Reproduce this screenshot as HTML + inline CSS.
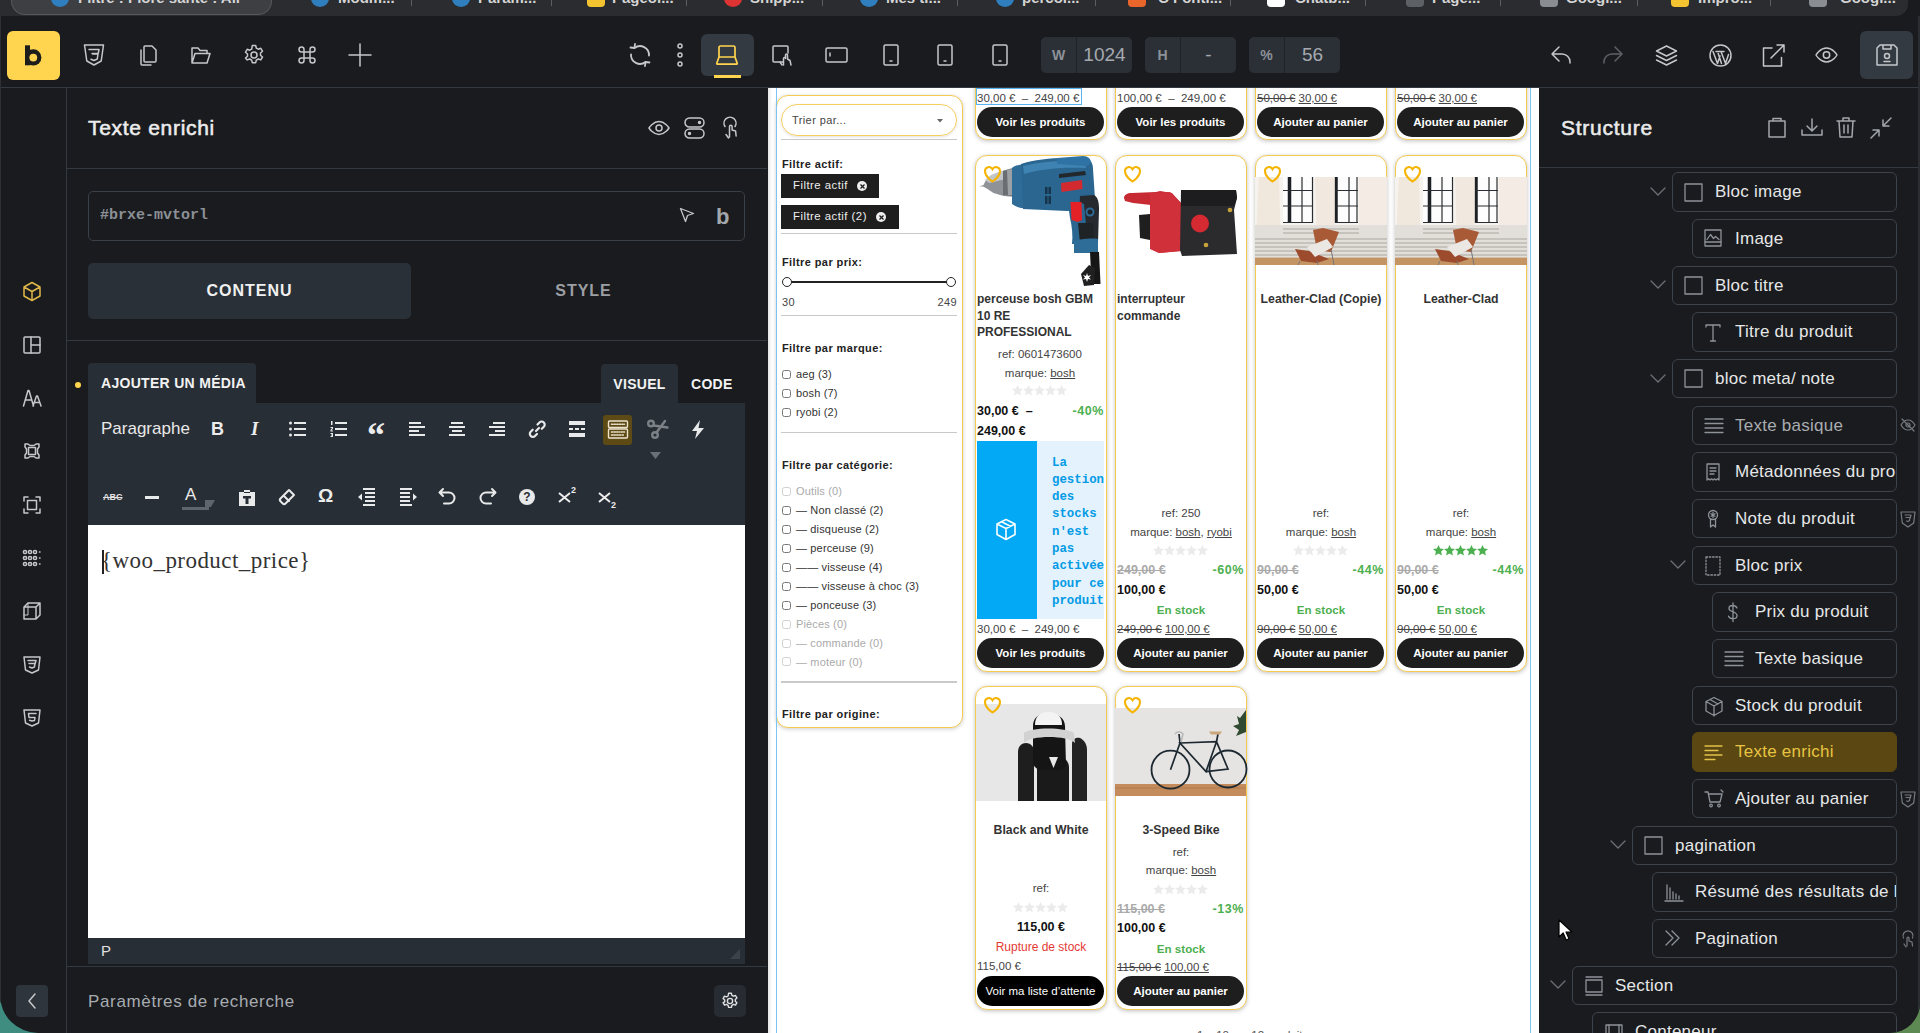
<!DOCTYPE html>
<html><head><meta charset="utf-8"><title>Bricks</title>
<style>
*{box-sizing:border-box;margin:0;padding:0}
html,body{width:1920px;height:1033px;overflow:hidden;background:#191b1e;font-family:"Liberation Sans",sans-serif}
.a{position:absolute}
svg{display:block;overflow:visible}
.t{position:absolute;white-space:nowrap}
.ic{stroke:#c5c7ca;fill:none;stroke-width:1.5;stroke-linecap:round;stroke-linejoin:round}
.line{position:absolute;background:#343a41}

body{background:linear-gradient(90deg,#3f8c80 0,#3f8c80 50%,#5d8a52 50%,#5d8a52 100%)}
#win{position:absolute;left:0;top:0;width:1920px;height:1033px;overflow:hidden;background:#191b1e;border-radius:0 0 30px 38px}
</style></head><body><div id="win">
<div class="a" style="left:0;top:0;width:1908px;height:16px;background:#2a2c2f;overflow:hidden;border-radius:0 0 12px 0">
<div class="a" style="left:12px;top:-20px;width:259px;height:34px;background:#3d3f43;border-radius:0 0 13px 13px;box-shadow:0 0 0 1px #56595d"></div>
<div class="a" style="left:51px;top:-10px;width:18px;height:17px;border-radius:50%;background:#2f7fbf"></div>
<div class="t" style="left:78px;top:-11px;font-size:15px;font-weight:bold;color:#d4d4d4;line-height:18px">Filtre : Flore santé : All</div>
<div class="a" style="left:311px;top:-10px;width:18px;height:17px;border-radius:50%;background:#2f7fbf"></div>
<div class="t" style="left:338px;top:-11px;font-size:15px;font-weight:bold;color:#d4d4d4;line-height:18px">Modifi...</div>
<div class="a" style="left:452px;top:-10px;width:18px;height:17px;border-radius:50%;background:#2f7fbf"></div>
<div class="t" style="left:478px;top:-11px;font-size:15px;font-weight:bold;color:#d4d4d4;line-height:18px">Param...</div>
<div class="a" style="left:587px;top:-10px;width:18px;height:17px;border-radius:4px;background:#f4c430"></div>
<div class="t" style="left:612px;top:-11px;font-size:15px;font-weight:bold;color:#d4d4d4;line-height:18px">Pageol...</div>
<div class="a" style="left:724px;top:-10px;width:18px;height:17px;border-radius:50%;background:#d33"></div>
<div class="t" style="left:750px;top:-11px;font-size:15px;font-weight:bold;color:#d4d4d4;line-height:18px">Snipp...</div>
<div class="a" style="left:860px;top:-10px;width:18px;height:17px;border-radius:50%;background:#2f7fbf"></div>
<div class="t" style="left:886px;top:-11px;font-size:15px;font-weight:bold;color:#d4d4d4;line-height:18px">Mes ti...</div>
<div class="a" style="left:996px;top:-10px;width:18px;height:17px;border-radius:50%;background:#2f7fbf"></div>
<div class="t" style="left:1022px;top:-11px;font-size:15px;font-weight:bold;color:#d4d4d4;line-height:18px">percol...</div>
<div class="a" style="left:1128px;top:-10px;width:18px;height:17px;border-radius:4px;background:#e8652b"></div>
<div class="t" style="left:1158px;top:-11px;font-size:15px;font-weight:bold;color:#d4d4d4;line-height:18px">C Fonti...</div>
<div class="a" style="left:1267px;top:-10px;width:18px;height:17px;border-radius:4px;background:#fff"></div>
<div class="t" style="left:1295px;top:-11px;font-size:15px;font-weight:bold;color:#d4d4d4;line-height:18px">Chatb...</div>
<div class="a" style="left:1406px;top:-10px;width:18px;height:17px;border-radius:4px;background:#5d6064"></div>
<div class="t" style="left:1432px;top:-11px;font-size:15px;font-weight:bold;color:#d4d4d4;line-height:18px">Page...</div>
<div class="a" style="left:1540px;top:-10px;width:18px;height:17px;border-radius:4px;background:#8a8d91"></div>
<div class="t" style="left:1566px;top:-11px;font-size:15px;font-weight:bold;color:#d4d4d4;line-height:18px">Googl...</div>
<div class="a" style="left:1671px;top:-10px;width:18px;height:17px;border-radius:4px;background:#f4c430"></div>
<div class="t" style="left:1698px;top:-11px;font-size:15px;font-weight:bold;color:#d4d4d4;line-height:18px">Impro...</div>
<div class="a" style="left:1809px;top:-10px;width:18px;height:17px;border-radius:4px;background:#8a8d91"></div>
<div class="t" style="left:1840px;top:-11px;font-size:15px;font-weight:bold;color:#d4d4d4;line-height:18px">Googl...</div>
<div class="a" style="left:411px;top:0;width:1px;height:6px;background:#5a5d61"></div>
<div class="a" style="left:551px;top:0;width:1px;height:6px;background:#5a5d61"></div>
<div class="a" style="left:686px;top:0;width:1px;height:6px;background:#5a5d61"></div>
<div class="a" style="left:822px;top:0;width:1px;height:6px;background:#5a5d61"></div>
<div class="a" style="left:957px;top:0;width:1px;height:6px;background:#5a5d61"></div>
<div class="a" style="left:1095px;top:0;width:1px;height:6px;background:#5a5d61"></div>
<div class="a" style="left:1230px;top:0;width:1px;height:6px;background:#5a5d61"></div>
<div class="a" style="left:1365px;top:0;width:1px;height:6px;background:#5a5d61"></div>
<div class="a" style="left:1500px;top:0;width:1px;height:6px;background:#5a5d61"></div>
<div class="a" style="left:1637px;top:0;width:1px;height:6px;background:#5a5d61"></div>
<div class="a" style="left:1770px;top:0;width:1px;height:6px;background:#5a5d61"></div>
</div>
<div class="a" style="left:0;top:16px;width:1920px;height:71px;background:#191b1e"></div>
<div class="line" style="left:0;top:87px;width:1920px;height:1px"></div>
<div class="a" style="left:7px;top:31px;width:53px;height:49px;background:#ffd54f;border-radius:6px"></div>
<svg class="a " style="left:24px;top:45px;width:19px;height:22px;" viewBox="0 0 19 22"><rect x="1" y="0.3" width="5" height="20" fill="#1d1d1b"/><circle cx="9.3" cy="12.4" r="8.1" fill="#1d1d1b"/><circle cx="9.3" cy="12.6" r="3.9" fill="#ffd54f"/></svg>
<svg class="a ic" style="left:83px;top:44px;width:22px;height:22px;" viewBox="0 0 22 22"><path d="M1.5 1h19l-2.3 16L11 21l-7.2-4z"/><path d="M6 5.5h10l-.8 4H9 M9.5 10h5.5l-.7 5L11 16.5l-3-1.2"/></svg>
<svg class="a ic" style="left:136px;top:44px;width:22px;height:22px;" viewBox="0 0 22 22"><path d="M9 2h7l4 4v11a1 1 0 0 1-1 1H9a1 1 0 0 1-1-1V3a1 1 0 0 1 1-1z"/><path d="M5 6v14a1 1 0 0 0 1 1h9"/></svg>
<svg class="a ic" style="left:189px;top:44px;width:22px;height:22px;" viewBox="0 0 22 22"><path d="M3 19V4h6l2 2.5h7v3 M3 19l3-9.5h15L18 19z"/></svg>
<svg class="a ic" style="left:243px;top:44px;width:22px;height:22px;" viewBox="0 0 22 22"><circle cx="11" cy="11" r="3"/><path d="M9.3 1.5h3.4l.6 2.6 2 1.1 2.5-.9 1.7 2.9-2 1.8v2.2l2 1.8-1.7 2.9-2.5-.9-2 1.1-.6 2.6H9.3l-.6-2.6-2-1.1-2.5.9L2.5 14l2-1.8V10l-2-1.8 1.7-2.9 2.5.9 2-1.1z"/></svg>
<svg class="a ic" style="left:296px;top:44px;width:22px;height:22px;" viewBox="0 0 22 22"><path d="M8 8h6v6H8z M8 8V5.5A2.5 2.5 0 1 0 5.5 8H8 M14 8V5.5A2.5 2.5 0 1 1 16.5 8H14 M8 14v2.5A2.5 2.5 0 1 1 5.5 14H8 M14 14v2.5a2.5 2.5 0 1 0 2.5-2.5H14"/></svg>
<svg class="a ic" style="left:349px;top:44px;width:22px;height:22px;" viewBox="0 0 22 22"><path d="M11 0v22 M0 11h22"/></svg>
<div class="a" style="left:701px;top:34px;width:53px;height:42px;background:#343a42;border-radius:6px"></div>
<div class="a" style="left:714px;top:75px;width:27px;height:2.5px;background:#ffd54f"></div>
<svg class="a ic" style="left:629px;top:44px;width:22px;height:22px;stroke-width:1.8" viewBox="0 0 22 22"><path d="M5.5 4A9 9 0 0 1 20 11.5 M16.5 18A9 9 0 0 1 2 10.5"/><path d="M1.5 3.5l4 .5.5-4 M20.5 18.5l-4-.5-.5 4"/></svg>
<svg class="a ic" style="left:674px;top:43px;width:12px;height:24px;" viewBox="0 0 12 24"><circle cx="6" cy="3" r="2"/><circle cx="6" cy="12" r="2"/><circle cx="6" cy="21" r="2"/></svg>
<svg class="a ic" style="left:716px;top:45px;width:22px;height:20px;stroke:#ffd54f;stroke-width:1.7" viewBox="0 0 22 20"><path d="M4.5 1h13a1.5 1.5 0 0 1 1.5 1.5V12H3V2.5A1.5 1.5 0 0 1 4.5 1z M3 12L.8 18.2a.8.8 0 0 0 .8 1h18.8a.8.8 0 0 0 .8-1L19 12"/></svg>
<svg class="a ic" style="left:771px;top:44px;width:22px;height:22px;" viewBox="0 0 22 22"><path d="M12 18H3a1 1 0 0 1-1-1V3a1 1 0 0 1 1-1h13a1 1 0 0 1 1 1v6"/><path d="M11 21l-2-3 M12.5 21v-6.5a1 1 0 0 1 2 0V11a1 1 0 0 1 2 0v4l2.5 1.5 1 4.5"/></svg>
<svg class="a ic" style="left:825px;top:47px;width:23px;height:16px;" viewBox="0 0 23 16"><rect x="1" y="1" width="21" height="14" rx="1.5"/><path d="M5 6v3"/></svg>
<svg class="a ic" style="left:883px;top:44px;width:16px;height:22px;" viewBox="0 0 16 22"><rect x="1" y="1" width="14" height="20" rx="1.5"/><path d="M7 17h2"/></svg>
<svg class="a ic" style="left:937px;top:44px;width:16px;height:22px;" viewBox="0 0 16 22"><rect x="1" y="1" width="14" height="20" rx="1.5"/><path d="M7 17h2"/></svg>
<svg class="a ic" style="left:992px;top:44px;width:16px;height:22px;" viewBox="0 0 16 22"><rect x="1" y="1" width="14" height="20" rx="1.5"/><path d="M7 17h2"/></svg>
<div class="a" style="left:1041px;top:37px;width:91px;height:36px;background:#2b3037;border-radius:5px"></div>
<div class="a" style="left:1076px;top:37px;width:1px;height:36px;background:#1e2126"></div>
<div class="t" style="left:1041px;top:37px;width:35px;text-align:center;line-height:36px;font-size:14px;font-weight:bold;color:#8d9298">W</div>
<div class="t" style="left:1077px;top:37px;width:55px;text-align:center;line-height:36px;font-size:19px;color:#a6aab0">1024</div>
<div class="a" style="left:1145px;top:37px;width:91px;height:36px;background:#2b3037;border-radius:5px"></div>
<div class="a" style="left:1180px;top:37px;width:1px;height:36px;background:#1e2126"></div>
<div class="t" style="left:1145px;top:37px;width:35px;text-align:center;line-height:36px;font-size:14px;font-weight:bold;color:#8d9298">H</div>
<div class="t" style="left:1181px;top:37px;width:55px;text-align:center;line-height:36px;font-size:19px;color:#a6aab0">-</div>
<div class="a" style="left:1249px;top:37px;width:91px;height:36px;background:#2b3037;border-radius:5px"></div>
<div class="a" style="left:1284px;top:37px;width:1px;height:36px;background:#1e2126"></div>
<div class="t" style="left:1249px;top:37px;width:35px;text-align:center;line-height:36px;font-size:14px;font-weight:bold;color:#8d9298">%</div>
<div class="t" style="left:1285px;top:37px;width:55px;text-align:center;line-height:36px;font-size:19px;color:#a6aab0">56</div>
<svg class="a ic" style="left:1550px;top:45px;width:22px;height:20px;" viewBox="0 0 22 20"><path d="M9 2L2 9l7 7 M2 9h10a8 8 0 0 1 8 8v1"/></svg>
<svg class="a ic" style="left:1602px;top:45px;width:22px;height:20px;stroke:#5d6166" viewBox="0 0 22 20"><path d="M13 2l7 7-7 7 M20 9H10a8 8 0 0 0-8 8v1"/></svg>
<svg class="a ic" style="left:1655px;top:44px;width:23px;height:22px;" viewBox="0 0 23 22"><path d="M11.5 2l10 5-10 5-10-5z M1.5 11.5l10 5 10-5 M1.5 16l10 5 10-5"/></svg>
<svg class="a ic" style="left:1709px;top:44px;width:23px;height:23px;" viewBox="0 0 23 23"><circle cx="11.5" cy="11.5" r="10.5"/><path d="M4 7.5l4.5 12 2.5-7.5 M7 7.5h3.5 M12 7.5l4.5 12 3-9 M11 7.5h4 M9.2 9.5l3.3 10"/></svg>
<svg class="a ic" style="left:1762px;top:44px;width:23px;height:23px;" viewBox="0 0 23 23"><path d="M10 4H1.5v18h18v-8.5 M9 14L22 1 M15 1h7v7"/></svg>
<svg class="a ic" style="left:1815px;top:47px;width:23px;height:16px;" viewBox="0 0 23 16"><path d="M1 8s4-7 10.5-7S22 8 22 8s-4 7-10.5 7S1 8 1 8z"/><circle cx="11.5" cy="8" r="3.2"/></svg>
<div class="a" style="left:1860px;top:31px;width:53px;height:48px;background:#343a42;border-radius:6px"></div>
<svg class="a ic" style="left:1876px;top:44px;width:22px;height:22px;" viewBox="0 0 22 22"><path d="M4 1h14l3 3v17H1V4z M7 1v4h8V1"/><circle cx="11" cy="12" r="2.5"/><path d="M8 17.5h6"/></svg>
<div class="line" style="left:66px;top:88px;width:1px;height:945px"></div>
<div class="a" style="left:0;top:88px;width:1px;height:945px;background:#2a2d31"></div>
<svg class="a ic" style="left:22px;top:281px;width:20px;height:20px;stroke:#e0b84a" viewBox="0 0 20 20"><path d="M10 1.5l8 4.5v9l-8 4.5-8-4.5V6z M2 6l8 4.5 8-4.5 M10 10.5v9"/></svg>
<svg class="a ic" style="left:22px;top:335px;width:20px;height:20px;" viewBox="0 0 20 20"><rect x="2" y="2" width="16" height="16" rx="1"/><path d="M9 2v16 M9 10h9"/></svg>
<svg class="a ic" style="left:22px;top:388px;width:20px;height:20px;" viewBox="0 0 20 20"><path d="M1.5 18L6 2.5h1L11.5 18 M3.2 12h6.6 M11 18l3.5-10h1L19 18 M12.3 14.5h5.5"/></svg>
<svg class="a ic" style="left:22px;top:441px;width:20px;height:20px;" viewBox="0 0 20 20"><path d="M3 3h3l2 1.5h4L14 3h3v3l-1.5 2v4L17 14v3h-3l-2-1.5H8L6 17H3v-3l1.5-2V8L3 6z"/><rect x="6.5" y="6.5" width="7" height="7"/></svg>
<svg class="a ic" style="left:22px;top:495px;width:20px;height:20px;" viewBox="0 0 20 20"><path d="M2 6V2h4 M14 2h4v4 M18 14v4h-4 M6 18H2v-4"/><rect x="5.5" y="5.5" width="9" height="9"/></svg>
<svg class="a ic" style="left:22px;top:548px;width:20px;height:20px;" viewBox="0 0 20 20"><circle cx="3" cy="4" r="1.6"/><circle cx="8" cy="4" r="1.6"/><circle cx="13" cy="4" r="1.6"/><circle cx="3" cy="10" r="1.6"/><circle cx="8" cy="10" r="1.6"/><circle cx="13" cy="10" r="1.6"/><circle cx="3" cy="16" r="1.6"/><circle cx="8" cy="16" r="1.6"/><circle cx="13" cy="16" r="1.6"/><path d="M17.5 4h.5 M17.5 10h.5 M17.5 16h.5"/></svg>
<svg class="a ic" style="left:22px;top:601px;width:20px;height:20px;" viewBox="0 0 20 20"><path d="M6 2h12v12l-4 4H2V6z M2 6h12v12 M14 6l4-4 M2 6l4-4"/><path d="M6 2v12H2" stroke-width="1"/></svg>
<svg class="a ic" style="left:22px;top:655px;width:20px;height:20px;" viewBox="0 0 20 20"><path d="M2 2h16l-1.5 13L10 18l-6.5-3z M6 5.5h8l-.8 3H8 M7 8.5h6l-.6 3.5L10 13l-2.5-1"/></svg>
<svg class="a ic" style="left:22px;top:708px;width:20px;height:20px;" viewBox="0 0 20 20"><path d="M2 2h16l-1.5 13L10 18l-6.5-3z M14 5.5H6.5l.5 4h6l-.5 3L10 13l-2.5-.8"/></svg>
<div class="a" style="left:16px;top:985px;width:32px;height:32px;background:#2f353c;border-radius:4px"></div>
<svg class="a ic" style="left:27px;top:993px;width:10px;height:16px;" viewBox="0 0 10 16"><path d="M8 1L2 8l6 7"/></svg>
<div class="t" style="left:88px;top:115.5px;font-size:21px;line-height:24px;color:#ececec;letter-spacing:0.7px;-webkit-text-stroke:0.55px #ececec">Texte enrichi</div>
<svg class="a ic" style="left:648px;top:120px;width:22px;height:16px;" viewBox="0 0 22 16"><path d="M1 8s4-6.5 10-6.5S21 8 21 8s-4 6.5-10 6.5S1 8 1 8z"/><circle cx="11" cy="8" r="3"/></svg>
<svg class="a ic" style="left:684px;top:117px;width:21px;height:22px;" viewBox="0 0 21 22"><rect x="1" y="1" width="19" height="9" rx="4.5"/><rect x="1" y="12" width="19" height="9" rx="4.5"/><circle cx="15.5" cy="5.5" r="1" fill="#c5c7ca"/><circle cx="5.5" cy="16.5" r="1" fill="#c5c7ca"/></svg>
<svg class="a ic" style="left:720px;top:117px;width:20px;height:22px;" viewBox="0 0 20 22"><path d="M5 9.5a6 6 0 1 1 10 0"/><path d="M8.5 21l-2.5-3.5 M9.5 20V9.5a1.3 1.3 0 0 1 2.6 0V13l3.5 1 .5 5"/></svg>
<div class="line" style="left:67px;top:168px;width:700px;height:1px"></div>
<div class="a" style="left:88px;top:191px;width:657px;height:50px;border:1px solid #3a4047;border-radius:5px"></div>
<div class="t" style="left:100px;top:207px;font-family:'Liberation Mono',monospace;font-size:15px;font-weight:bold;line-height:18px;color:#8b9096">#brxe-mvtorl</div>
<svg class="a ic" style="left:679px;top:207px;width:16px;height:16px;stroke-width:1.3" viewBox="0 0 16 16"><path d="M1.5 1.5l13 5-6 2-2 6z"/></svg>
<div class="t" style="left:716px;top:205px;font-size:22px;font-weight:bold;line-height:24px;color:#a3a7ab">b</div>
<div class="a" style="left:88px;top:263px;width:323px;height:56px;background:#293038;border-radius:5px"></div>
<div class="t" style="left:88px;top:263px;width:323px;line-height:56px;text-align:center;font-size:16px;font-weight:bold;color:#f0f0f0;letter-spacing:1px">CONTENU</div>
<div class="t" style="left:422px;top:263px;width:323px;line-height:56px;text-align:center;font-size:16px;font-weight:bold;color:#9c9fa3;letter-spacing:1px">STYLE</div>
<div class="line" style="left:67px;top:340px;width:700px;height:1px"></div>
<div class="a" style="left:75px;top:382px;width:6px;height:6px;border-radius:50%;background:#ffd54f"></div>
<div class="a" style="left:88px;top:363px;width:168px;height:42px;background:#282e35;border-radius:4px 4px 0 0"></div>
<div class="t" style="left:101px;top:375px;font-size:14px;font-weight:bold;line-height:16px;color:#f2f2f2;letter-spacing:0.3px">AJOUTER UN MÉDIA</div>
<div class="a" style="left:601px;top:364px;width:77px;height:41px;background:#282e35;border-radius:4px 4px 0 0"></div>
<div class="t" style="left:601px;top:376px;width:77px;text-align:center;font-size:14px;font-weight:bold;line-height:16px;color:#f2f2f2;letter-spacing:0.3px">VISUEL</div>
<div class="t" style="left:691px;top:376px;font-size:14px;font-weight:bold;line-height:16px;color:#f2f2f2;letter-spacing:0.3px">CODE</div>
<div class="a" style="left:88px;top:403px;width:657px;height:122px;background:#282e35"></div>
<div class="t" style="left:101px;top:419px;font-size:17px;line-height:20px;color:#e8e8e8">Paragraphe</div>
<div class="t" style="left:211px;top:419px;font-size:18px;font-weight:bold;line-height:20px;color:#ececec">B</div>
<div class="t" style="left:251px;top:419px;font-size:19px;font-style:italic;font-family:'Liberation Serif',serif;font-weight:bold;line-height:20px;color:#ececec">I</div>
<svg class="a " style="left:289px;top:421px;width:17px;height:16px;fill:#e8e9ea;stroke:none" viewBox="0 0 17 16"><circle cx="1.5" cy="2" r="1.5"/><circle cx="1.5" cy="8" r="1.5"/><circle cx="1.5" cy="14" r="1.5"/><path d="M5 1h12v2H5z M5 7h12v2H5z M5 13h12v2H5z"/></svg>
<svg class="a " style="left:330px;top:421px;width:17px;height:16px;fill:#e8e9ea;stroke:none" viewBox="0 0 17 16"><path d="M1 0h1.5v4H1z M0.5 6h2.5v1.5L1.5 9.5H3v1H0.5V9L2 7H.5z M.5 12h2.5v4H.5v-1h1.5v-.5H1v-1h1V13H.5z M5 1h12v2H5z M5 7h12v2H5z M5 13h12v2H5z"/></svg>
<div class="t" style="left:367px;top:418px;font-size:36px;font-weight:bold;font-family:'Liberation Serif',serif;line-height:34px;color:#ececec">&#8220;</div>
<svg class="a " style="left:409px;top:421px;width:16px;height:16px;fill:#e8e9ea;stroke:none" viewBox="0 0 16 16"><path d="M0 1h12v2H0z M0 5h16v2H0z M0 9h10v2H0z M0 13h16v2H0z"/></svg>
<svg class="a " style="left:449px;top:421px;width:16px;height:16px;fill:#e8e9ea;stroke:none" viewBox="0 0 16 16"><path d="M2 1h12v2H2z M0 5h16v2H0z M3 9h10v2H3z M0 13h16v2H0z"/></svg>
<svg class="a " style="left:489px;top:421px;width:16px;height:16px;fill:#e8e9ea;stroke:none" viewBox="0 0 16 16"><path d="M4 1h12v2H4z M0 5h16v2H0z M6 9h10v2H6z M0 13h16v2H0z"/></svg>
<svg class="a ic" style="left:528px;top:420px;width:19px;height:19px;stroke:#e8e9ea;stroke-width:2;stroke-width:2.2" viewBox="0 0 19 19"><path d="M8 11l3-3 M9.5 4.5l2-2a3 3 0 0 1 4.3 4.3l-2 2 M9 14l-2 2a3 3 0 0 1-4.3-4.3l2-2"/></svg>
<svg class="a " style="left:569px;top:421px;width:16px;height:16px;fill:#e8e9ea;stroke:none" viewBox="0 0 16 16"><path d="M0 0h16v4H0z M0 12h16v4H0z M0 7h4v2H0z M6 7h4v2H6z M12 7h4v2h-4z"/></svg>
<div class="a" style="left:603px;top:415px;width:29px;height:30px;background:#5d4a14;border-radius:3px"></div>
<svg class="a ic" style="left:607px;top:420px;width:22px;height:19px;stroke:#ece4cf;stroke-width:1.4" viewBox="0 0 22 19"><rect x="1.5" y="1" width="19" height="6.5" rx="1"/><rect x="1.5" y="9" width="19" height="9" rx="1"/><path d="M4.5 4.2h13 M4.5 12h8 M14 12h3.5 M4.5 15h9 M15 15h2.5" stroke-dasharray="1.3 1.3" stroke-width="1.6"/></svg>
<svg class="a ic" style="left:647px;top:419px;width:22px;height:20px;stroke:#7c8187;stroke-width:2.4" viewBox="0 0 22 20"><circle cx="4" cy="4.5" r="2.8"/><circle cx="8" cy="16" r="2.8"/><path d="M6.5 6.5l14 2 M9.5 13.5L18 2"/></svg>
<svg class="a " style="left:650px;top:452px;width:11px;height:8px;fill:#6b7077" viewBox="0 0 11 8"><path d="M0 0h11L5.5 7z"/></svg>
<svg class="a " style="left:692px;top:420px;width:12px;height:19px;fill:#e8e9ea;stroke:none" viewBox="0 0 12 19"><path d="M8 0L0 11h5l-2 8 9-11H6.5z"/></svg>
<div class="t" style="left:103px;top:491px;font-size:9px;font-weight:bold;line-height:12px;color:#e0e0e0;text-decoration:line-through">ABC</div>
<div class="a" style="left:145px;top:496px;width:14px;height:2.5px;background:#e8e9ea"></div>
<div class="t" style="left:185px;top:485px;font-size:17px;line-height:20px;color:#e8e8e8">A</div>
<div class="a" style="left:182px;top:507px;width:27px;height:3px;background:#5f656c"></div>
<svg class="a " style="left:205px;top:500px;width:10px;height:7px;fill:#5f656c" viewBox="0 0 10 7"><path d="M0 0h10L6 7H0z"/></svg>
<svg class="a " style="left:238px;top:488px;width:18px;height:18px;fill:#e8e9ea;stroke:none;fill-rule:evenodd" viewBox="0 0 18 18"><path d="M1 4h16v14H1z M6 2h6v3H6z M5 8h8v2.5H10.5V16h-3v-5.5H5z"/></svg>
<svg class="a ic" style="left:278px;top:488px;width:18px;height:18px;stroke:#e8e9ea;stroke-width:2" viewBox="0 0 18 18"><path d="M11 2l5 5-8.5 8.5a2 2 0 0 1-2.8 0L2.5 13.3a2 2 0 0 1 0-2.8z M6 8l5 5"/></svg>
<div class="t" style="left:318px;top:485px;font-size:19px;font-weight:bold;line-height:22px;color:#ececec">&#937;</div>
<svg class="a " style="left:358px;top:487px;width:18px;height:20px;fill:#e8e9ea;stroke:none" viewBox="0 0 18 20"><path d="M5 1h12v2H5z M7 5h10v2H7z M7 9h10v2H7z M7 13h10v2H7z M5 17h12v2H5z M0 10l4-3.5v7z"/></svg>
<svg class="a " style="left:399px;top:487px;width:18px;height:20px;fill:#e8e9ea;stroke:none" viewBox="0 0 18 20"><path d="M1 1h12v2H1z M1 5h10v2H1z M1 9h10v2H1z M1 13h10v2H1z M1 17h12v2H1z M18 10l-4-3.5v7z"/></svg>
<svg class="a ic" style="left:438px;top:488px;width:19px;height:17px;stroke:#e8e9ea;stroke-width:2" viewBox="0 0 19 17"><path d="M5 1L1.5 4.5 5 8 M2 4.5h9a5.5 5.5 0 0 1 0 11H6"/></svg>
<svg class="a ic" style="left:478px;top:488px;width:19px;height:17px;stroke:#e8e9ea;stroke-width:2" viewBox="0 0 19 17"><path d="M14 1l3.5 3.5L14 8 M17 4.5H8a5.5 5.5 0 0 0 0 11h5"/></svg>
<div class="a" style="left:519px;top:489px;width:16px;height:16px;border-radius:50%;background:#e8e9ea"></div>
<div class="t" style="left:519px;top:489px;width:16px;text-align:center;font-size:12px;font-weight:bold;line-height:16px;color:#282e35">?</div>
<svg class="a ic" style="left:558px;top:492px;width:13px;height:11px;stroke:#ececec;stroke-width:2;stroke-linecap:butt" viewBox="0 0 13 11"><path d="M1 1l11 9 M12 1L1 10"/></svg>
<div class="t" style="left:571px;top:485px;font-size:9px;font-weight:bold;line-height:10px;color:#ececec">2</div>
<svg class="a ic" style="left:598px;top:492px;width:13px;height:11px;stroke:#ececec;stroke-width:2;stroke-linecap:butt" viewBox="0 0 13 11"><path d="M1 1l11 9 M12 1L1 10"/></svg>
<div class="t" style="left:611px;top:499.5px;font-size:9px;font-weight:bold;line-height:10px;color:#ececec">2</div>
<div class="a" style="left:88px;top:525px;width:657px;height:413px;background:#ffffff"></div>
<div class="t" style="left:101px;top:548px;font-family:'Liberation Serif',serif;font-size:23px;letter-spacing:0.45px;line-height:26px;color:#333">{woo_product_price}</div>
<div class="a" style="left:101.5px;top:549.5px;width:2px;height:24px;background:#222"></div>
<div class="a" style="left:88px;top:938px;width:657px;height:26px;background:#282e35"></div>
<div class="t" style="left:101px;top:942px;font-size:15px;line-height:18px;color:#e0e0e0">P</div>
<svg class="a " style="left:729px;top:948px;width:12px;height:12px;fill:#4a5058;opacity:.6" viewBox="0 0 12 12"><path d="M11 1v10H1z"/></svg>
<div class="line" style="left:67px;top:966px;width:700px;height:1px"></div>
<div class="t" style="left:88px;top:991.5px;font-size:17px;line-height:20px;color:#a8acb1;letter-spacing:0.65px">Paramètres de recherche</div>
<div class="a" style="left:714px;top:985px;width:32px;height:32px;background:#272c33;border-radius:5px"></div>
<svg class="a ic" style="left:721px;top:992px;width:18px;height:18px;stroke:#e0e0e0;stroke-width:1.4" viewBox="0 0 18 18"><circle cx="9" cy="9" r="2.6"/><path d="M7.6 1.2h2.8l.5 2.1 1.6.9 2-.7 1.4 2.4-1.6 1.5v1.8l1.6 1.5-1.4 2.4-2-.7-1.6.9-.5 2.1H7.6l-.5-2.1-1.6-.9-2 .7-1.4-2.4L3.7 9.9V8.1L2.1 6.6l1.4-2.4 2 .7 1.6-.9z"/></svg>
<div class="a" style="left:768px;top:88px;width:771px;height:945px;background:#fff;overflow:hidden" id="cv">
</div>
<div class="a" style="left:768px;top:88px;width:771px;height:945px;overflow:hidden"><div class="a" style="left:-768px;top:-88px;width:1920px;height:1033px">
<div class="a" style="left:768px;top:88px;width:4px;height:945px;background:linear-gradient(90deg,rgba(0,0,0,.10),rgba(0,0,0,0))"></div>
<div class="a" style="left:775.5px;top:95px;width:187.5px;height:632.5px;border:1.5px solid #f6ca50;border-radius:12px;box-shadow:0 1px 4px rgba(0,0,0,.2);background:#fff"></div>
<div class="a" style="left:781px;top:104px;width:176px;height:32px;border:1.5px solid #f5cf60;border-radius:16px;box-shadow:0 1px 3px rgba(0,0,0,.12)"></div>
<div class="t" style="top:112.5px;font-size:11px;line-height:15px;color:#444;letter-spacing:0.4px;left:792px;">Trier par...</div>
<svg class="a " style="left:937px;top:118.5px;width:6px;height:4px;fill:#666" viewBox="0 0 6 4"><path d="M0 0h6L3 3.5z"/></svg>
<div class="a" style="left:781px;top:138.7px;width:176px;height:1.5px;background:#c9c9c9"></div>
<div class="t" style="top:157.0px;font-size:11px;line-height:15px;color:#222;font-weight:bold;letter-spacing:0.4px;left:782px;">Filtre actif:</div>
<div class="a" style="left:781px;top:174px;width:98px;height:24px;background:#1e1e1e"></div>
<div class="t" style="top:178.3px;font-size:11.3px;line-height:15.3px;color:#eee;letter-spacing:0.5px;left:793px;">Filtre actif</div>
<div class="a" style="left:857px;top:181px;width:10px;height:10px;border-radius:50%;background:#eee"></div>
<svg class="a " style="left:859.5px;top:183.5px;width:5px;height:5px;stroke:#1e1e1e;stroke-width:1.3" viewBox="0 0 5 5"><path d="M0.5 0.5l4 4 M4.5 0.5l-4 4"/></svg>
<div class="a" style="left:781px;top:205px;width:118px;height:24px;background:#1e1e1e"></div>
<div class="t" style="top:209.3px;font-size:11.3px;line-height:15.3px;color:#eee;letter-spacing:0.5px;left:793px;">Filtre actif (2)</div>
<div class="a" style="left:876px;top:212px;width:10px;height:10px;border-radius:50%;background:#eee"></div>
<svg class="a " style="left:878.5px;top:214.5px;width:5px;height:5px;stroke:#1e1e1e;stroke-width:1.3" viewBox="0 0 5 5"><path d="M0.5 0.5l4 4 M4.5 0.5l-4 4"/></svg>
<div class="a" style="left:781px;top:232.5px;width:176px;height:1.5px;background:#c9c9c9"></div>
<div class="t" style="top:255.0px;font-size:11px;line-height:15px;color:#222;font-weight:bold;letter-spacing:0.4px;left:782px;">Filtre par prix:</div>
<div class="a" style="left:787px;top:281.2px;width:164px;height:2.2px;background:#222"></div>
<div class="a" style="left:781.5px;top:277px;width:10px;height:10px;border-radius:50%;background:#fff;border:1.5px solid #222"></div>
<div class="a" style="left:945.5px;top:277px;width:10px;height:10px;border-radius:50%;background:#fff;border:1.5px solid #222"></div>
<div class="t" style="top:294.5px;font-size:11px;line-height:15px;color:#444;letter-spacing:0.4px;left:782px;">30</div>
<div class="t" style="top:294.5px;font-size:11px;line-height:15px;color:#444;letter-spacing:0.4px;left:917.0px;width:40px;text-align:right;">249</div>
<div class="a" style="left:781px;top:314.8px;width:176px;height:1.5px;background:#c9c9c9"></div>
<div class="t" style="top:341.0px;font-size:11px;line-height:15px;color:#222;font-weight:bold;letter-spacing:0.4px;left:782px;">Filtre par marque:</div>
<div class="a" style="left:782px;top:369.5px;width:9px;height:9px;border:1px solid #777;border-radius:2.5px"></div><div class="t" style="top:366.5px;font-size:11px;line-height:15px;color:#333;letter-spacing:0.15px;left:796px;">aeg (3)</div>
<div class="a" style="left:782px;top:388.5px;width:9px;height:9px;border:1px solid #777;border-radius:2.5px"></div><div class="t" style="top:385.5px;font-size:11px;line-height:15px;color:#333;letter-spacing:0.15px;left:796px;">bosh (7)</div>
<div class="a" style="left:782px;top:407.5px;width:9px;height:9px;border:1px solid #777;border-radius:2.5px"></div><div class="t" style="top:404.5px;font-size:11px;line-height:15px;color:#333;letter-spacing:0.15px;left:796px;">ryobi (2)</div>
<div class="a" style="left:781px;top:431.8px;width:176px;height:1.5px;background:#c9c9c9"></div>
<div class="t" style="top:457.5px;font-size:11px;line-height:15px;color:#222;font-weight:bold;letter-spacing:0.4px;left:782px;">Filtre par catégorie:</div>
<div class="a" style="left:782px;top:487.1px;width:9px;height:9px;border:1px solid #d0d0d0;border-radius:2.5px"></div><div class="t" style="top:484.1px;font-size:11px;line-height:15px;color:#aaa;letter-spacing:0.15px;left:796px;">Outils (0)</div>
<div class="a" style="left:782px;top:506.03000000000003px;width:9px;height:9px;border:1px solid #777;border-radius:2.5px"></div><div class="t" style="top:503.0px;font-size:11px;line-height:15px;color:#333;letter-spacing:0.15px;left:796px;">— Non classé (2)</div>
<div class="a" style="left:782px;top:524.96px;width:9px;height:9px;border:1px solid #777;border-radius:2.5px"></div><div class="t" style="top:522.0px;font-size:11px;line-height:15px;color:#333;letter-spacing:0.15px;left:796px;">— disqueuse (2)</div>
<div class="a" style="left:782px;top:543.89px;width:9px;height:9px;border:1px solid #777;border-radius:2.5px"></div><div class="t" style="top:540.9px;font-size:11px;line-height:15px;color:#333;letter-spacing:0.15px;left:796px;">— perceuse (9)</div>
<div class="a" style="left:782px;top:562.82px;width:9px;height:9px;border:1px solid #777;border-radius:2.5px"></div><div class="t" style="top:559.8px;font-size:11px;line-height:15px;color:#333;letter-spacing:0.15px;left:796px;">—— visseuse (4)</div>
<div class="a" style="left:782px;top:581.75px;width:9px;height:9px;border:1px solid #777;border-radius:2.5px"></div><div class="t" style="top:578.8px;font-size:11px;line-height:15px;color:#333;letter-spacing:0.15px;left:796px;">—— visseuse à choc (3)</div>
<div class="a" style="left:782px;top:600.6800000000001px;width:9px;height:9px;border:1px solid #777;border-radius:2.5px"></div><div class="t" style="top:597.7px;font-size:11px;line-height:15px;color:#333;letter-spacing:0.15px;left:796px;">— ponceuse (3)</div>
<div class="a" style="left:782px;top:619.61px;width:9px;height:9px;border:1px solid #d0d0d0;border-radius:2.5px"></div><div class="t" style="top:616.6px;font-size:11px;line-height:15px;color:#aaa;letter-spacing:0.15px;left:796px;">Pièces (0)</div>
<div class="a" style="left:782px;top:638.54px;width:9px;height:9px;border:1px solid #d0d0d0;border-radius:2.5px"></div><div class="t" style="top:635.5px;font-size:11px;line-height:15px;color:#aaa;letter-spacing:0.15px;left:796px;">— commande (0)</div>
<div class="a" style="left:782px;top:657.47px;width:9px;height:9px;border:1px solid #d0d0d0;border-radius:2.5px"></div><div class="t" style="top:654.5px;font-size:11px;line-height:15px;color:#aaa;letter-spacing:0.15px;left:796px;">— moteur (0)</div>
<div class="a" style="left:781px;top:681px;width:176px;height:1.5px;background:#c9c9c9"></div>
<div class="t" style="top:706.5px;font-size:11px;line-height:15px;color:#222;font-weight:bold;letter-spacing:0.4px;left:782px;">Filtre par origine:</div>
<div class="a" style="left:975px;top:60px;width:132px;height:80px;border:1.5px solid #f6ca50;border-radius:12px;box-shadow:0 1px 4px rgba(0,0,0,.25);background:#fff"></div>
<div class="a" style="left:1115px;top:60px;width:132px;height:80px;border:1.5px solid #f6ca50;border-radius:12px;box-shadow:0 1px 4px rgba(0,0,0,.25);background:#fff"></div>
<div class="a" style="left:1255px;top:60px;width:132px;height:80px;border:1.5px solid #f6ca50;border-radius:12px;box-shadow:0 1px 4px rgba(0,0,0,.25);background:#fff"></div>
<div class="a" style="left:1395px;top:60px;width:132px;height:80px;border:1.5px solid #f6ca50;border-radius:12px;box-shadow:0 1px 4px rgba(0,0,0,.25);background:#fff"></div>
<div class="t" style="top:90.5px;font-size:11.5px;line-height:15.5px;color:#444;left:977px;">30,00 € &nbsp;–&nbsp; 249,00 €</div>
<div class="a" style="left:976px;top:88px;width:106px;height:17px;border:1px solid #58b4f0"></div>
<div class="t" style="top:90.5px;font-size:11.5px;line-height:15.5px;color:#444;left:1117px;">100,00 € &nbsp;–&nbsp; 249,00 €</div>
<div class="t" style="top:90.5px;font-size:11.5px;line-height:15.5px;color:#444;left:1257px;"><s>50,00 €</s> <u>30,00 €</u></div>
<div class="t" style="top:90.5px;font-size:11.5px;line-height:15.5px;color:#444;left:1397px;"><s>50,00 €</s> <u>30,00 €</u></div>
<div class="a" style="left:977px;top:107px;width:127px;height:30px;background:#1e1e1e;border-radius:15.0px"></div><div class="t" style="top:115.0px;font-size:11.5px;line-height:15.5px;color:#fff;font-weight:bold;left:977.0px;width:127px;text-align:center;">Voir les produits</div>
<div class="a" style="left:1117px;top:107px;width:127px;height:30px;background:#1e1e1e;border-radius:15.0px"></div><div class="t" style="top:115.0px;font-size:11.5px;line-height:15.5px;color:#fff;font-weight:bold;left:1117.0px;width:127px;text-align:center;">Voir les produits</div>
<div class="a" style="left:1257px;top:107px;width:127px;height:30px;background:#1e1e1e;border-radius:15.0px"></div><div class="t" style="top:115.0px;font-size:11.5px;line-height:15.5px;color:#fff;font-weight:bold;left:1257.0px;width:127px;text-align:center;">Ajouter au panier</div>
<div class="a" style="left:1397px;top:107px;width:127px;height:30px;background:#1e1e1e;border-radius:15.0px"></div><div class="t" style="top:115.0px;font-size:11.5px;line-height:15.5px;color:#fff;font-weight:bold;left:1397.0px;width:127px;text-align:center;">Ajouter au panier</div>
<div class="a" style="left:975px;top:155px;width:132px;height:517px;border:1.5px solid #f6ca50;border-radius:12px;box-shadow:0 1px 4px rgba(0,0,0,.25);background:#fff"></div>
<div class="a" style="left:1115px;top:155px;width:132px;height:517px;border:1.5px solid #f6ca50;border-radius:12px;box-shadow:0 1px 4px rgba(0,0,0,.25);background:#fff"></div>
<div class="a" style="left:1255px;top:155px;width:132px;height:517px;border:1.5px solid #f6ca50;border-radius:12px;box-shadow:0 1px 4px rgba(0,0,0,.25);background:#fff"></div>
<div class="a" style="left:1395px;top:155px;width:132px;height:517px;border:1.5px solid #f6ca50;border-radius:12px;box-shadow:0 1px 4px rgba(0,0,0,.25);background:#fff"></div>
<svg class="a " style="left:977px;top:156px;width:128px;height:132px;" viewBox="0 0 128 132"><path d="M2.5 30.5l4-1.5 2-4 6-5 10-4 12-3 6 1 1 26-5 1-12-1-10-3-6-4-2.5-1.5-2-1z" fill="#8f9397"/><path d="M8 24l6-5 10-4 12-3 6 1 .5 9-18 2-12 3z" fill="#c3c6c9"/><path d="M26 15l10-3 6 1 1 26-5 1-12-1z" fill="#6a6e73"/><path d="M30 14l5-1 1 26-5 0z" fill="#9da1a5"/><path d="M35 12c3-3 10-4 16-4l3 44c-7 1-14 0-19-4z" fill="#2f6d98"/><path d="M44 8c18-6 44-7 66-5 4 .5 6 5 6 10l2 30c0 6-4 10-10 11l-18 1-44-2z" fill="#2b6690"/><path d="M46 10c20-5 44-6 62-4l1 6c-20-1-42 0-62 6z" fill="#3f83b3"/><path d="M80 2l26-2c5 0 8 3 8 7l-4 3-30-2z" fill="#2f73a4"/><path d="M82 18l26-3 1 4-27 3z" fill="#23282c"/><path d="M84 27l21-3 .5 9-21 3z" fill="#d22a2f"/><path d="M68 31h2.5v7H68z M71.5 31H74v7h-2.5z M68 40h2.5v8H68z M71.5 40H74v8h-2.5z" fill="#16344c"/><path d="M103 40l14-1c4 2 5 8 5 14l-1 34-20 0z" fill="#262a2e"/><path d="M91 48c6-2 12-2 16 0l2 20c-2 6-4 12-5 20l-9 0c1-8 0-18-2-26z" fill="#2b6690"/><path d="M93.5 46h11l.5 18-4 2-6.5-2z" fill="#e32126"/><circle cx="113" cy="56" r="4.5" fill="#2e6a95"/><circle cx="113" cy="56" r="2.5" fill="#1e2226"/><path d="M101 67h15l1 20h-14z" fill="#202326"/><path d="M97 85c6-2 16-3 24-2v14H97z" fill="#2f6d99"/><path d="M113 96h9l1.5 32h-9z" fill="#161616"/><path d="M104 118l8-9 6 3-1 17-10 1z" fill="#202020"/><path d="M110 117l1 3 3-1-2 2.5 2 2-3-.5-1 3-1-3-3 .5 2-2-2-2.5 3 1z" fill="#fff"/></svg>
<svg class="a " style="left:983.5px;top:165.5px;width:17px;height:17px;fill:none;stroke:#f5b400;stroke-width:2" viewBox="0 0 17 17"><path d="M8.5 15.5S1 10.8 1 5.3A4 4 0 0 1 8.5 3.2 4 4 0 0 1 16 5.3c0 5.5-7.5 10.2-7.5 10.2z"/></svg>
<div class="t" style="top:291.3px;font-size:12px;line-height:16px;color:#333;font-weight:bold;left:977px;">perceuse bosh GBM</div>
<div class="t" style="top:307.7px;font-size:12px;line-height:16px;color:#333;font-weight:bold;left:977px;">10 RE</div>
<div class="t" style="top:324.1px;font-size:12px;line-height:16px;color:#333;font-weight:bold;left:977px;">PROFESSIONAL</div>
<div class="t" style="top:347.1px;font-size:11.5px;line-height:15.5px;color:#444;left:975.0px;width:130px;text-align:center;">ref: 0601473600</div>
<div class="t" style="top:366.1px;font-size:11.5px;line-height:15.5px;color:#444;left:975.0px;width:130px;text-align:center;">marque: <u>bosh</u></div>
<svg class="a " style="left:1011.5px;top:385.0px;width:11px;height:11px;fill:#ebebeb" viewBox="0 0 11 11"><path d="M5.5 0l1.6 3.6 3.9.4-2.9 2.6.8 3.9-3.4-2-3.4 2 .8-3.9L0 4l3.9-.4z"/></svg><svg class="a " style="left:1022.5px;top:385.0px;width:11px;height:11px;fill:#ebebeb" viewBox="0 0 11 11"><path d="M5.5 0l1.6 3.6 3.9.4-2.9 2.6.8 3.9-3.4-2-3.4 2 .8-3.9L0 4l3.9-.4z"/></svg><svg class="a " style="left:1033.5px;top:385.0px;width:11px;height:11px;fill:#ebebeb" viewBox="0 0 11 11"><path d="M5.5 0l1.6 3.6 3.9.4-2.9 2.6.8 3.9-3.4-2-3.4 2 .8-3.9L0 4l3.9-.4z"/></svg><svg class="a " style="left:1044.5px;top:385.0px;width:11px;height:11px;fill:#ebebeb" viewBox="0 0 11 11"><path d="M5.5 0l1.6 3.6 3.9.4-2.9 2.6.8 3.9-3.4-2-3.4 2 .8-3.9L0 4l3.9-.4z"/></svg><svg class="a " style="left:1055.5px;top:385.0px;width:11px;height:11px;fill:#ebebeb" viewBox="0 0 11 11"><path d="M5.5 0l1.6 3.6 3.9.4-2.9 2.6.8 3.9-3.4-2-3.4 2 .8-3.9L0 4l3.9-.4z"/></svg>
<div class="t" style="top:402.6px;font-size:12.5px;line-height:16.5px;color:#111;font-weight:bold;left:977px;">30,00 € &nbsp;–</div>
<div class="t" style="top:402.6px;font-size:12.5px;line-height:16.5px;color:#4caf50;font-weight:bold;letter-spacing:0.6px;left:1054.0px;width:50px;text-align:right;">-40%</div>
<div class="t" style="top:422.6px;font-size:12.5px;line-height:16.5px;color:#111;font-weight:bold;left:977px;">249,00 €</div>
<div class="a" style="left:977px;top:441px;width:60px;height:178px;background:#03a9f4"></div>
<div class="a" style="left:1037px;top:441px;width:67px;height:178px;background:#e3f2fd"></div>
<svg class="a " style="left:995px;top:518px;width:22px;height:23px;fill:none;stroke:#fff;stroke-width:1.6;stroke-linejoin:round" viewBox="0 0 22 23"><path d="M11 1.5l9 4.5v10.5l-9 5-9-5V6z M2 6l9 4.5 9-4.5 M11 10.5v11 M6.5 3.8l9 4.5"/></svg>
<div class="a" style="left:1037px;top:441px;width:67px;height:178px;overflow:hidden"><div class="a" style="left:-1037px;top:-441px;width:1920px;height:1033px">
<div class="t" style="top:454.6px;font-size:12.4px;line-height:16.4px;color:#039be5;font-weight:bold;left:1052px;font-family:'Liberation Mono',monospace">La</div>
<div class="t" style="top:471.9px;font-size:12.4px;line-height:16.4px;color:#039be5;font-weight:bold;left:1052px;font-family:'Liberation Mono',monospace">gestion</div>
<div class="t" style="top:489.2px;font-size:12.4px;line-height:16.4px;color:#039be5;font-weight:bold;left:1052px;font-family:'Liberation Mono',monospace">des</div>
<div class="t" style="top:506.4px;font-size:12.4px;line-height:16.4px;color:#039be5;font-weight:bold;left:1052px;font-family:'Liberation Mono',monospace">stocks</div>
<div class="t" style="top:523.7px;font-size:12.4px;line-height:16.4px;color:#039be5;font-weight:bold;left:1052px;font-family:'Liberation Mono',monospace">n'est</div>
<div class="t" style="top:541.0px;font-size:12.4px;line-height:16.4px;color:#039be5;font-weight:bold;left:1052px;font-family:'Liberation Mono',monospace">pas</div>
<div class="t" style="top:558.3px;font-size:12.4px;line-height:16.4px;color:#039be5;font-weight:bold;left:1052px;font-family:'Liberation Mono',monospace">activée</div>
<div class="t" style="top:575.6px;font-size:12.4px;line-height:16.4px;color:#039be5;font-weight:bold;left:1052px;font-family:'Liberation Mono',monospace">pour ce</div>
<div class="t" style="top:592.8px;font-size:12.4px;line-height:16.4px;color:#039be5;font-weight:bold;left:1052px;font-family:'Liberation Mono',monospace">produit</div>
</div></div>
<div class="t" style="top:621.5px;font-size:11.5px;line-height:15.5px;color:#444;left:977px;">30,00 € &nbsp;–&nbsp; 249,00 €</div>
<div class="a" style="left:977px;top:638px;width:127px;height:30px;background:#1e1e1e;border-radius:15.0px"></div><div class="t" style="top:646.0px;font-size:11.5px;line-height:15.5px;color:#fff;font-weight:bold;left:977.0px;width:127px;text-align:center;">Voir les produits</div>
<svg class="a " style="left:1117px;top:160px;width:128px;height:128px;" viewBox="0 0 128 128"><path d="M7 38c0-3 3-5 8-5l24-1 4-1 12 2 9 10v48l-22 2-8-4 0-44-18-2-8-2z" fill="#c72a33"/><path d="M33 33l20-1 11 11v48l-22 2-9-4z" fill="#d0303a"/><path d="M22 55l11-1v26l-10-2z" fill="#1f1f1f"/><path d="M64 30l55 0 1 8-3 12 3 44-55 2-2-6z" fill="#2b2b2d"/><path d="M64 30l55 0 1 8-3 8H64z" fill="#1d1d1f"/><circle cx="83" cy="63.5" r="9" fill="#d52a31"/><circle cx="113" cy="50" r="2.3" fill="#c8a33a"/><circle cx="89" cy="85" r="2.3" fill="#c8a33a"/></svg>
<svg class="a " style="left:1123.5px;top:165.5px;width:17px;height:17px;fill:none;stroke:#f5b400;stroke-width:2" viewBox="0 0 17 17"><path d="M8.5 15.5S1 10.8 1 5.3A4 4 0 0 1 8.5 3.2 4 4 0 0 1 16 5.3c0 5.5-7.5 10.2-7.5 10.2z"/></svg>
<div class="t" style="top:291.3px;font-size:12px;line-height:16px;color:#333;font-weight:bold;left:1117px;">interrupteur</div>
<div class="t" style="top:307.7px;font-size:12px;line-height:16px;color:#333;font-weight:bold;left:1117px;">commande</div>
<svg class="a " style="left:1255px;top:177px;width:132px;height:88px;" viewBox="0 0 132 88"><rect width="132" height="88" fill="#f6f2ee"/><rect x="28" y="0" width="30" height="46" fill="#fdfdfd"/><rect x="80" y="0" width="23" height="46" fill="#fdfdfd"/><path d="M34.5 0v46 M81 0v46" stroke="#1d2024" stroke-width="3.5"/><path d="M47 0v46 M57.5 0v46 M94 0v46 M102 0v46 M28 13.5h30 M28 29h30 M28 45.5h30 M80 13.5h23 M80 29h23 M80 45.5h23" stroke="#2a2d31" stroke-width="1.2"/><path d="M4 0h20l2 80H0z" fill="#efe4d8" opacity=".8"/><path d="M60 0h20v62H62z" fill="#f0e6db" opacity=".8"/><path d="M104 0h28v57h-28z" fill="#f3ebe2" opacity=".85"/><rect x="0" y="48" width="132" height="33" fill="#e2dfda"/><path d="M28 52h76 M28 56h76 M0 62h132 M0 66h132 M0 70h132 M0 74h132 M0 78h132" stroke="#aaa59e" stroke-width="1"/><rect x="0" y="80.6" width="132" height="7.4" fill="#c49462"/><path d="M58 53l10-2 16 4-8 20-14-2z" fill="#a85a36"/><path d="M40 72l14 2 20 8-12 4-16-2z" fill="#9c4c2c"/><path d="M52 70l20-8 6 8-18 10z" fill="#ebe7e2"/><path d="M45 84l-2 4 M62 84l1 4 M76 72l3 16" stroke="#777" stroke-width="1"/></svg>
<svg class="a " style="left:1395px;top:177px;width:132px;height:88px;" viewBox="0 0 132 88"><rect width="132" height="88" fill="#f6f2ee"/><rect x="28" y="0" width="30" height="46" fill="#fdfdfd"/><rect x="80" y="0" width="23" height="46" fill="#fdfdfd"/><path d="M34.5 0v46 M81 0v46" stroke="#1d2024" stroke-width="3.5"/><path d="M47 0v46 M57.5 0v46 M94 0v46 M102 0v46 M28 13.5h30 M28 29h30 M28 45.5h30 M80 13.5h23 M80 29h23 M80 45.5h23" stroke="#2a2d31" stroke-width="1.2"/><path d="M4 0h20l2 80H0z" fill="#efe4d8" opacity=".8"/><path d="M60 0h20v62H62z" fill="#f0e6db" opacity=".8"/><path d="M104 0h28v57h-28z" fill="#f3ebe2" opacity=".85"/><rect x="0" y="48" width="132" height="33" fill="#e2dfda"/><path d="M28 52h76 M28 56h76 M0 62h132 M0 66h132 M0 70h132 M0 74h132 M0 78h132" stroke="#aaa59e" stroke-width="1"/><rect x="0" y="80.6" width="132" height="7.4" fill="#c49462"/><path d="M58 53l10-2 16 4-8 20-14-2z" fill="#a85a36"/><path d="M40 72l14 2 20 8-12 4-16-2z" fill="#9c4c2c"/><path d="M52 70l20-8 6 8-18 10z" fill="#ebe7e2"/><path d="M45 84l-2 4 M62 84l1 4 M76 72l3 16" stroke="#777" stroke-width="1"/></svg>
<svg class="a " style="left:1263.5px;top:165.5px;width:17px;height:17px;fill:none;stroke:#f5b400;stroke-width:2" viewBox="0 0 17 17"><path d="M8.5 15.5S1 10.8 1 5.3A4 4 0 0 1 8.5 3.2 4 4 0 0 1 16 5.3c0 5.5-7.5 10.2-7.5 10.2z"/></svg>
<svg class="a " style="left:1403.5px;top:165.5px;width:17px;height:17px;fill:none;stroke:#f5b400;stroke-width:2" viewBox="0 0 17 17"><path d="M8.5 15.5S1 10.8 1 5.3A4 4 0 0 1 8.5 3.2 4 4 0 0 1 16 5.3c0 5.5-7.5 10.2-7.5 10.2z"/></svg>
<div class="t" style="top:291.2px;font-size:12.3px;line-height:16.3px;color:#333;font-weight:bold;left:1255.0px;width:132px;text-align:center;">Leather-Clad (Copie)</div>
<div class="t" style="top:291.2px;font-size:12.3px;line-height:16.3px;color:#333;font-weight:bold;left:1395.0px;width:132px;text-align:center;">Leather-Clad</div>
<div class="t" style="top:505.8px;font-size:11.5px;line-height:15.5px;color:#444;left:1115.0px;width:132px;text-align:center;">ref: 250</div>
<div class="t" style="top:524.6px;font-size:11.5px;line-height:15.5px;color:#444;left:1115.0px;width:132px;text-align:center;">marque: <u>bosh</u>, <u>ryobi</u></div>
<svg class="a " style="left:1152.5px;top:545.0px;width:11px;height:11px;fill:#ebebeb" viewBox="0 0 11 11"><path d="M5.5 0l1.6 3.6 3.9.4-2.9 2.6.8 3.9-3.4-2-3.4 2 .8-3.9L0 4l3.9-.4z"/></svg><svg class="a " style="left:1163.5px;top:545.0px;width:11px;height:11px;fill:#ebebeb" viewBox="0 0 11 11"><path d="M5.5 0l1.6 3.6 3.9.4-2.9 2.6.8 3.9-3.4-2-3.4 2 .8-3.9L0 4l3.9-.4z"/></svg><svg class="a " style="left:1174.5px;top:545.0px;width:11px;height:11px;fill:#ebebeb" viewBox="0 0 11 11"><path d="M5.5 0l1.6 3.6 3.9.4-2.9 2.6.8 3.9-3.4-2-3.4 2 .8-3.9L0 4l3.9-.4z"/></svg><svg class="a " style="left:1185.5px;top:545.0px;width:11px;height:11px;fill:#ebebeb" viewBox="0 0 11 11"><path d="M5.5 0l1.6 3.6 3.9.4-2.9 2.6.8 3.9-3.4-2-3.4 2 .8-3.9L0 4l3.9-.4z"/></svg><svg class="a " style="left:1196.5px;top:545.0px;width:11px;height:11px;fill:#ebebeb" viewBox="0 0 11 11"><path d="M5.5 0l1.6 3.6 3.9.4-2.9 2.6.8 3.9-3.4-2-3.4 2 .8-3.9L0 4l3.9-.4z"/></svg>
<div class="t" style="top:562.0px;font-size:12.5px;line-height:16.5px;color:#aaa;font-weight:bold;left:1117px;"><s>249,00 €</s></div>
<div class="t" style="top:562.0px;font-size:12.5px;line-height:16.5px;color:#4caf50;font-weight:bold;letter-spacing:0.6px;left:1194.0px;width:50px;text-align:right;">-60%</div>
<div class="t" style="top:581.5px;font-size:12.5px;line-height:16.5px;color:#111;font-weight:bold;left:1117px;">100,00 €</div>
<div class="t" style="top:601.9px;font-size:11.6px;line-height:15.6px;color:#4caf50;font-weight:bold;left:1115.0px;width:132px;text-align:center;">En stock</div>
<div class="t" style="top:621.5px;font-size:11.5px;line-height:15.5px;color:#444;left:1117px;"><s>249,00 €</s> <u>100,00 €</u></div>
<div class="a" style="left:1117px;top:638px;width:127px;height:30px;background:#1e1e1e;border-radius:15.0px"></div><div class="t" style="top:646.0px;font-size:11.5px;line-height:15.5px;color:#fff;font-weight:bold;left:1117.0px;width:127px;text-align:center;">Ajouter au panier</div>
<div class="t" style="top:505.8px;font-size:11.5px;line-height:15.5px;color:#444;left:1255.0px;width:132px;text-align:center;">ref:</div>
<div class="t" style="top:524.6px;font-size:11.5px;line-height:15.5px;color:#444;left:1255.0px;width:132px;text-align:center;">marque: <u>bosh</u></div>
<svg class="a " style="left:1292.5px;top:545.0px;width:11px;height:11px;fill:#ebebeb" viewBox="0 0 11 11"><path d="M5.5 0l1.6 3.6 3.9.4-2.9 2.6.8 3.9-3.4-2-3.4 2 .8-3.9L0 4l3.9-.4z"/></svg><svg class="a " style="left:1303.5px;top:545.0px;width:11px;height:11px;fill:#ebebeb" viewBox="0 0 11 11"><path d="M5.5 0l1.6 3.6 3.9.4-2.9 2.6.8 3.9-3.4-2-3.4 2 .8-3.9L0 4l3.9-.4z"/></svg><svg class="a " style="left:1314.5px;top:545.0px;width:11px;height:11px;fill:#ebebeb" viewBox="0 0 11 11"><path d="M5.5 0l1.6 3.6 3.9.4-2.9 2.6.8 3.9-3.4-2-3.4 2 .8-3.9L0 4l3.9-.4z"/></svg><svg class="a " style="left:1325.5px;top:545.0px;width:11px;height:11px;fill:#ebebeb" viewBox="0 0 11 11"><path d="M5.5 0l1.6 3.6 3.9.4-2.9 2.6.8 3.9-3.4-2-3.4 2 .8-3.9L0 4l3.9-.4z"/></svg><svg class="a " style="left:1336.5px;top:545.0px;width:11px;height:11px;fill:#ebebeb" viewBox="0 0 11 11"><path d="M5.5 0l1.6 3.6 3.9.4-2.9 2.6.8 3.9-3.4-2-3.4 2 .8-3.9L0 4l3.9-.4z"/></svg>
<div class="t" style="top:562.0px;font-size:12.5px;line-height:16.5px;color:#aaa;font-weight:bold;left:1257px;"><s>90,00 €</s></div>
<div class="t" style="top:562.0px;font-size:12.5px;line-height:16.5px;color:#4caf50;font-weight:bold;letter-spacing:0.6px;left:1334.0px;width:50px;text-align:right;">-44%</div>
<div class="t" style="top:581.5px;font-size:12.5px;line-height:16.5px;color:#111;font-weight:bold;left:1257px;">50,00 €</div>
<div class="t" style="top:601.9px;font-size:11.6px;line-height:15.6px;color:#4caf50;font-weight:bold;left:1255.0px;width:132px;text-align:center;">En stock</div>
<div class="t" style="top:621.5px;font-size:11.5px;line-height:15.5px;color:#444;left:1257px;"><s>90,00 €</s> <u>50,00 €</u></div>
<div class="a" style="left:1257px;top:638px;width:127px;height:30px;background:#1e1e1e;border-radius:15.0px"></div><div class="t" style="top:646.0px;font-size:11.5px;line-height:15.5px;color:#fff;font-weight:bold;left:1257.0px;width:127px;text-align:center;">Ajouter au panier</div>
<div class="t" style="top:505.8px;font-size:11.5px;line-height:15.5px;color:#444;left:1395.0px;width:132px;text-align:center;">ref:</div>
<div class="t" style="top:524.6px;font-size:11.5px;line-height:15.5px;color:#444;left:1395.0px;width:132px;text-align:center;">marque: <u>bosh</u></div>
<svg class="a " style="left:1432.5px;top:545.0px;width:11px;height:11px;fill:#4caf50" viewBox="0 0 11 11"><path d="M5.5 0l1.6 3.6 3.9.4-2.9 2.6.8 3.9-3.4-2-3.4 2 .8-3.9L0 4l3.9-.4z"/></svg><svg class="a " style="left:1443.5px;top:545.0px;width:11px;height:11px;fill:#4caf50" viewBox="0 0 11 11"><path d="M5.5 0l1.6 3.6 3.9.4-2.9 2.6.8 3.9-3.4-2-3.4 2 .8-3.9L0 4l3.9-.4z"/></svg><svg class="a " style="left:1454.5px;top:545.0px;width:11px;height:11px;fill:#4caf50" viewBox="0 0 11 11"><path d="M5.5 0l1.6 3.6 3.9.4-2.9 2.6.8 3.9-3.4-2-3.4 2 .8-3.9L0 4l3.9-.4z"/></svg><svg class="a " style="left:1465.5px;top:545.0px;width:11px;height:11px;fill:#4caf50" viewBox="0 0 11 11"><path d="M5.5 0l1.6 3.6 3.9.4-2.9 2.6.8 3.9-3.4-2-3.4 2 .8-3.9L0 4l3.9-.4z"/></svg><svg class="a " style="left:1476.5px;top:545.0px;width:11px;height:11px;fill:#4caf50" viewBox="0 0 11 11"><path d="M5.5 0l1.6 3.6 3.9.4-2.9 2.6.8 3.9-3.4-2-3.4 2 .8-3.9L0 4l3.9-.4z"/></svg>
<div class="t" style="top:562.0px;font-size:12.5px;line-height:16.5px;color:#aaa;font-weight:bold;left:1397px;"><s>90,00 €</s></div>
<div class="t" style="top:562.0px;font-size:12.5px;line-height:16.5px;color:#4caf50;font-weight:bold;letter-spacing:0.6px;left:1474.0px;width:50px;text-align:right;">-44%</div>
<div class="t" style="top:581.5px;font-size:12.5px;line-height:16.5px;color:#111;font-weight:bold;left:1397px;">50,00 €</div>
<div class="t" style="top:601.9px;font-size:11.6px;line-height:15.6px;color:#4caf50;font-weight:bold;left:1395.0px;width:132px;text-align:center;">En stock</div>
<div class="t" style="top:621.5px;font-size:11.5px;line-height:15.5px;color:#444;left:1397px;"><s>90,00 €</s> <u>50,00 €</u></div>
<div class="a" style="left:1397px;top:638px;width:127px;height:30px;background:#1e1e1e;border-radius:15.0px"></div><div class="t" style="top:646.0px;font-size:11.5px;line-height:15.5px;color:#fff;font-weight:bold;left:1397.0px;width:127px;text-align:center;">Ajouter au panier</div>
<div class="a" style="left:975px;top:686px;width:132px;height:324px;border:1.5px solid #f6ca50;border-radius:12px;box-shadow:0 1px 4px rgba(0,0,0,.25);background:#fff"></div>
<div class="a" style="left:1115px;top:686px;width:132px;height:324px;border:1.5px solid #f6ca50;border-radius:12px;box-shadow:0 1px 4px rgba(0,0,0,.25);background:#fff"></div>
<svg class="a " style="left:976px;top:704px;width:130px;height:97px;" viewBox="0 0 130 97"><rect width="130" height="97" fill="#e7e7e7"/><path d="M42 97V48c0-6 4-9 8-9s8 3 8 9v49z" fill="#1e1e1e"/><path d="M96 97V40c0-5 4-7 8-6 4 2 7 6 7 12v51z" fill="#232323"/><path d="M61 97V62c1-6 5-8 11-9h12c6 1 9 5 9 11v33z" fill="#1a1a1a"/><path d="M57 22c0-8 6-13 15-13s17 5 17 13l1 40c-4 4-8 6-13 4H66c-4 0-7-2-9-6z" fill="#151515"/><path d="M59 21c0-9 5-13 13.5-13S86 12 86 21z" fill="#f3f3f3"/><path d="M48 29c6-6 42-6 50 0l1 10c-7-8-45-8-51 0z" fill="#d2d2d2"/><path d="M73 53h9l-4.5 11z" fill="#e8e8e8"/></svg>
<svg class="a " style="left:983.5px;top:696.5px;width:17px;height:17px;fill:none;stroke:#f5b400;stroke-width:2" viewBox="0 0 17 17"><path d="M8.5 15.5S1 10.8 1 5.3A4 4 0 0 1 8.5 3.2 4 4 0 0 1 16 5.3c0 5.5-7.5 10.2-7.5 10.2z"/></svg>
<svg class="a " style="left:1115px;top:708px;width:131px;height:88px;" viewBox="0 0 131 88"><rect width="131" height="88" fill="#e6e4e3"/><rect y="76" width="131" height="12" fill="#c48c5c"/><path d="M0 80h131" stroke="#b07a4c" stroke-width="1"/><circle cx="55.5" cy="61.7" r="19" fill="none" stroke="#1c2830" stroke-width="1.8"/><circle cx="113" cy="61" r="18.5" fill="none" stroke="#1c2830" stroke-width="1.8"/><path d="M65 35L101.5 33.7 91 63.6z M65 35L55.5 61.7 M91 63.6L113 61 101.5 33.7 M101.5 33.7L103 26 M65 35l-1-9" fill="none" stroke="#1c2830" stroke-width="1.7"/><path d="M94 23.5h13l-2 3H96z" fill="#c9a77a"/><path d="M60 26c2-3 6-3 8 0l-2 8" fill="none" stroke="#b8b8b8" stroke-width="1.6"/><path d="M131 2l-6 8-3-2 2 8-6 2 6 4-3 6 10-4z" fill="#2f4a30"/></svg>
<svg class="a " style="left:1123.5px;top:696.5px;width:17px;height:17px;fill:none;stroke:#f5b400;stroke-width:2" viewBox="0 0 17 17"><path d="M8.5 15.5S1 10.8 1 5.3A4 4 0 0 1 8.5 3.2 4 4 0 0 1 16 5.3c0 5.5-7.5 10.2-7.5 10.2z"/></svg>
<div class="t" style="top:821.9px;font-size:12.3px;line-height:16.3px;color:#333;font-weight:bold;left:975.0px;width:132px;text-align:center;">Black and White</div>
<div class="t" style="top:881.0px;font-size:11.5px;line-height:15.5px;color:#444;left:975.0px;width:132px;text-align:center;">ref:</div>
<svg class="a " style="left:1012.5px;top:901.5px;width:11px;height:11px;fill:#ebebeb" viewBox="0 0 11 11"><path d="M5.5 0l1.6 3.6 3.9.4-2.9 2.6.8 3.9-3.4-2-3.4 2 .8-3.9L0 4l3.9-.4z"/></svg><svg class="a " style="left:1023.5px;top:901.5px;width:11px;height:11px;fill:#ebebeb" viewBox="0 0 11 11"><path d="M5.5 0l1.6 3.6 3.9.4-2.9 2.6.8 3.9-3.4-2-3.4 2 .8-3.9L0 4l3.9-.4z"/></svg><svg class="a " style="left:1034.5px;top:901.5px;width:11px;height:11px;fill:#ebebeb" viewBox="0 0 11 11"><path d="M5.5 0l1.6 3.6 3.9.4-2.9 2.6.8 3.9-3.4-2-3.4 2 .8-3.9L0 4l3.9-.4z"/></svg><svg class="a " style="left:1045.5px;top:901.5px;width:11px;height:11px;fill:#ebebeb" viewBox="0 0 11 11"><path d="M5.5 0l1.6 3.6 3.9.4-2.9 2.6.8 3.9-3.4-2-3.4 2 .8-3.9L0 4l3.9-.4z"/></svg><svg class="a " style="left:1056.5px;top:901.5px;width:11px;height:11px;fill:#ebebeb" viewBox="0 0 11 11"><path d="M5.5 0l1.6 3.6 3.9.4-2.9 2.6.8 3.9-3.4-2-3.4 2 .8-3.9L0 4l3.9-.4z"/></svg>
<div class="t" style="top:918.5px;font-size:12.5px;line-height:16.5px;color:#111;font-weight:bold;left:975.0px;width:132px;text-align:center;">115,00 €</div>
<div class="t" style="top:939.3px;font-size:12px;line-height:16px;color:#e53935;left:975.0px;width:132px;text-align:center;">Rupture de stock</div>
<div class="t" style="top:959.3px;font-size:11.5px;line-height:15.5px;color:#444;left:977px;">115,00 €</div>
<div class="a" style="left:977px;top:976px;width:127px;height:30px;background:#000;border-radius:15.0px"></div><div class="t" style="top:984.0px;font-size:11.5px;line-height:15.5px;color:#fff;left:977.0px;width:127px;text-align:center;">Voir ma liste d’attente</div>
<div class="t" style="top:821.9px;font-size:12.3px;line-height:16.3px;color:#333;font-weight:bold;left:1115.0px;width:132px;text-align:center;">3-Speed Bike</div>
<div class="t" style="top:844.5px;font-size:11.5px;line-height:15.5px;color:#444;left:1115.0px;width:132px;text-align:center;">ref:</div>
<div class="t" style="top:863.3px;font-size:11.5px;line-height:15.5px;color:#444;left:1115.0px;width:132px;text-align:center;">marque: <u>bosh</u></div>
<svg class="a " style="left:1152.5px;top:883.5px;width:11px;height:11px;fill:#ebebeb" viewBox="0 0 11 11"><path d="M5.5 0l1.6 3.6 3.9.4-2.9 2.6.8 3.9-3.4-2-3.4 2 .8-3.9L0 4l3.9-.4z"/></svg><svg class="a " style="left:1163.5px;top:883.5px;width:11px;height:11px;fill:#ebebeb" viewBox="0 0 11 11"><path d="M5.5 0l1.6 3.6 3.9.4-2.9 2.6.8 3.9-3.4-2-3.4 2 .8-3.9L0 4l3.9-.4z"/></svg><svg class="a " style="left:1174.5px;top:883.5px;width:11px;height:11px;fill:#ebebeb" viewBox="0 0 11 11"><path d="M5.5 0l1.6 3.6 3.9.4-2.9 2.6.8 3.9-3.4-2-3.4 2 .8-3.9L0 4l3.9-.4z"/></svg><svg class="a " style="left:1185.5px;top:883.5px;width:11px;height:11px;fill:#ebebeb" viewBox="0 0 11 11"><path d="M5.5 0l1.6 3.6 3.9.4-2.9 2.6.8 3.9-3.4-2-3.4 2 .8-3.9L0 4l3.9-.4z"/></svg><svg class="a " style="left:1196.5px;top:883.5px;width:11px;height:11px;fill:#ebebeb" viewBox="0 0 11 11"><path d="M5.5 0l1.6 3.6 3.9.4-2.9 2.6.8 3.9-3.4-2-3.4 2 .8-3.9L0 4l3.9-.4z"/></svg>
<div class="t" style="top:900.8px;font-size:12.5px;line-height:16.5px;color:#aaa;font-weight:bold;left:1117px;"><s>115,00 €</s></div>
<div class="t" style="top:900.8px;font-size:12.5px;line-height:16.5px;color:#4caf50;font-weight:bold;letter-spacing:0.6px;left:1194.0px;width:50px;text-align:right;">-13%</div>
<div class="t" style="top:920.2px;font-size:12.5px;line-height:16.5px;color:#111;font-weight:bold;left:1117px;">100,00 €</div>
<div class="t" style="top:940.5px;font-size:11.6px;line-height:15.6px;color:#4caf50;font-weight:bold;left:1115.0px;width:132px;text-align:center;">En stock</div>
<div class="t" style="top:960.0px;font-size:11.5px;line-height:15.5px;color:#444;left:1117px;"><s>115,00 €</s> <u>100,00 €</u></div>
<div class="a" style="left:1117px;top:976px;width:127px;height:30px;background:#1e1e1e;border-radius:15.0px"></div><div class="t" style="top:984.0px;font-size:11.5px;line-height:15.5px;color:#fff;font-weight:bold;left:1117.0px;width:127px;text-align:center;">Ajouter au panier</div>
<div class="t" style="top:1027.5px;font-size:11.5px;line-height:15.5px;color:#555;left:1197px;">1 – 10 sur 12 produits</div>
<div class="a" style="left:775.5px;top:88px;width:1.5px;height:945px;background:#7cc4f3"></div>
<div class="a" style="left:1529.5px;top:88px;width:1.5px;height:945px;background:#7cc4f3"></div>
</div></div>
<div class="t" style="left:1561px;top:114.5px;font-size:21px;line-height:26px;color:#eaeaea;letter-spacing:0.75px;-webkit-text-stroke:0.55px #eaeaea">Structure</div>
<svg class="a ic" style="left:1767px;top:116px;width:20px;height:23px;stroke:#a3a7ac" viewBox="0 0 20 23"><path d="M2 5h16v16H2z M6 5V2.5h8V5"/></svg>
<svg class="a ic" style="left:1801px;top:118px;width:22px;height:19px;stroke:#a3a7ac" viewBox="0 0 22 19"><path d="M11 1v11 M6 8l5 5 5-5 M1 12v5h20v-5"/></svg>
<svg class="a ic" style="left:1836px;top:116px;width:20px;height:23px;stroke:#a3a7ac" viewBox="0 0 20 23"><path d="M1 5h18 M7 5V2h6v3 M3 5l1 16h12l1-16 M8 9v8 M12 9v8"/></svg>
<svg class="a ic" style="left:1870px;top:117px;width:22px;height:22px;stroke:#a3a7ac" viewBox="0 0 22 22"><path d="M21 1l-8 8 M13 3v6h6 M1 21l8-8 M9 19v-6H3"/></svg>
<div class="line" style="left:1539px;top:167px;width:381px;height:1px"></div>
<div class="a" style="left:1672px;top:172.3px;width:225px;height:39.4px;border:1px solid #3d434b;border-radius:6px;background:transparent"></div>
<svg class="a ic" style="left:1650px;top:187.0px;width:16px;height:9px;stroke:#6c7177;stroke-width:1.3" viewBox="0 0 16 9"><path d="M1 1l7 7 7-7"/></svg>
<svg class="a ic" style="left:1683.5px;top:182.5px;width:19px;height:19px;stroke:#8e9399;stroke-width:1.3" viewBox="0 0 19 19"><rect x="1" y="1" width="17" height="17"/></svg>
<div class="a" style="left:1715px;top:172.3px;width:181px;height:39px;overflow:hidden"><div class="t" style="left:0;top:0;line-height:39px;font-size:17px;letter-spacing:0.25px;color:#e6e7e8">Bloc image</div></div>
<div class="a" style="left:1692px;top:219.0px;width:205px;height:39.4px;border:1px solid #3d434b;border-radius:6px;background:transparent"></div>
<svg class="a ic" style="left:1703.5px;top:229.17000000000002px;width:19px;height:19px;stroke:#8e9399;stroke-width:1.3" viewBox="0 0 19 19"><rect x="1" y="1" width="16" height="16"/><path d="M1 13h16 M3 10.5l3.5-5 3 4 2-2 3.5 3"/></svg>
<div class="a" style="left:1735px;top:219.0px;width:161px;height:39px;overflow:hidden"><div class="t" style="left:0;top:0;line-height:39px;font-size:17px;letter-spacing:0.25px;color:#e6e7e8">Image</div></div>
<div class="a" style="left:1672px;top:265.6px;width:225px;height:39.4px;border:1px solid #3d434b;border-radius:6px;background:transparent"></div>
<svg class="a ic" style="left:1650px;top:280.34px;width:16px;height:9px;stroke:#6c7177;stroke-width:1.3" viewBox="0 0 16 9"><path d="M1 1l7 7 7-7"/></svg>
<svg class="a ic" style="left:1683.5px;top:275.84px;width:19px;height:19px;stroke:#8e9399;stroke-width:1.3" viewBox="0 0 19 19"><rect x="1" y="1" width="17" height="17"/></svg>
<div class="a" style="left:1715px;top:265.6px;width:181px;height:39px;overflow:hidden"><div class="t" style="left:0;top:0;line-height:39px;font-size:17px;letter-spacing:0.25px;color:#e6e7e8">Bloc titre</div></div>
<div class="a" style="left:1692px;top:312.3px;width:205px;height:39.4px;border:1px solid #3d434b;border-radius:6px;background:transparent"></div>
<svg class="a ic" style="left:1703.5px;top:322.51px;width:19px;height:19px;stroke:#8e9399;stroke-width:1.3" viewBox="0 0 19 19"><path d="M2 2h14 M9 2v16 M6.5 18h5 M2 2v2 M16 2v2"/></svg>
<div class="a" style="left:1735px;top:312.3px;width:161px;height:39px;overflow:hidden"><div class="t" style="left:0;top:0;line-height:39px;font-size:17px;letter-spacing:0.25px;color:#e6e7e8">Titre du produit</div></div>
<div class="a" style="left:1672px;top:359.0px;width:225px;height:39.4px;border:1px solid #3d434b;border-radius:6px;background:transparent"></div>
<svg class="a ic" style="left:1650px;top:373.68px;width:16px;height:9px;stroke:#6c7177;stroke-width:1.3" viewBox="0 0 16 9"><path d="M1 1l7 7 7-7"/></svg>
<svg class="a ic" style="left:1683.5px;top:369.18px;width:19px;height:19px;stroke:#8e9399;stroke-width:1.3" viewBox="0 0 19 19"><rect x="1" y="1" width="17" height="17"/></svg>
<div class="a" style="left:1715px;top:359.0px;width:181px;height:39px;overflow:hidden"><div class="t" style="left:0;top:0;line-height:39px;font-size:17px;letter-spacing:0.25px;color:#e6e7e8">bloc meta/ note</div></div>
<div class="a" style="left:1692px;top:405.7px;width:205px;height:39.4px;border:1px solid #3d434b;border-radius:6px;background:transparent"></div>
<svg class="a ic" style="left:1703.5px;top:415.85px;width:19px;height:19px;stroke:#8e9399;stroke-width:1.3" viewBox="0 0 19 19"><path d="M1 3h18 M1 7.5h18 M1 12h18 M1 16.5h18"/></svg>
<div class="a" style="left:1735px;top:405.7px;width:161px;height:39px;overflow:hidden"><div class="t" style="left:0;top:0;line-height:39px;font-size:17px;letter-spacing:0.25px;color:#a9acb0">Texte basique</div></div>
<svg class="a ic" style="left:1900px;top:417.35px;width:16px;height:16px;stroke:#777b80;stroke-width:1.2" viewBox="0 0 16 16"><path d="M1 8s3-5 7-5 7 5 7 5-3 5-7 5-7-5-7-5z M2 2l12 12"/><circle cx="8" cy="8" r="2"/></svg>
<div class="a" style="left:1692px;top:452.3px;width:205px;height:39.4px;border:1px solid #3d434b;border-radius:6px;background:transparent"></div>
<svg class="a ic" style="left:1703.5px;top:462.52px;width:19px;height:19px;stroke:#8e9399;stroke-width:1.3" viewBox="0 0 19 19"><path d="M3 1h12v16l-1.5-1.2-1.5 1.2-1.5-1.2L9 17l-1.5-1.2L6 17l-1.5-1.2L3 17z M6 5h6 M6 8h6 M6 11h4"/></svg>
<div class="a" style="left:1735px;top:452.3px;width:161px;height:39px;overflow:hidden"><div class="t" style="left:0;top:0;line-height:39px;font-size:17px;letter-spacing:0.25px;color:#e6e7e8">Métadonnées du produit</div></div>
<div class="a" style="left:1692px;top:499.0px;width:205px;height:39.4px;border:1px solid #3d434b;border-radius:6px;background:transparent"></div>
<svg class="a ic" style="left:1703.5px;top:509.19000000000005px;width:19px;height:19px;stroke:#8e9399;stroke-width:1.3" viewBox="0 0 19 19"><circle cx="9" cy="6" r="4.5"/><path d="M6.5 10v8l2.5-2 2.5 2v-8 M9 3.5v5 M7 4.8l4 2.4 M11 4.8l-4 2.4"/></svg>
<div class="a" style="left:1735px;top:499.0px;width:161px;height:39px;overflow:hidden"><div class="t" style="left:0;top:0;line-height:39px;font-size:17px;letter-spacing:0.25px;color:#e6e7e8">Note du produit</div></div>
<svg class="a ic" style="left:1900px;top:510.69000000000005px;width:16px;height:17px;stroke:#777b80;stroke-width:1.2" viewBox="0 0 16 17"><path d="M1 1h14l-1.3 11L8 16l-5.7-4z M5 4h6l-.6 2.5H6 M6 6.5h4l-.5 3L8 10.5 6.5 10"/></svg>
<div class="a" style="left:1692px;top:545.7px;width:205px;height:39.4px;border:1px solid #3d434b;border-radius:6px;background:transparent"></div>
<svg class="a ic" style="left:1670px;top:560.3600000000001px;width:16px;height:9px;stroke:#6c7177;stroke-width:1.3" viewBox="0 0 16 9"><path d="M1 1l7 7 7-7"/></svg>
<svg class="a ic" style="left:1703.5px;top:555.8600000000001px;width:19px;height:20px;stroke:#8e9399;stroke-width:1.3" viewBox="0 0 19 20"><rect x="2" y="1" width="14" height="18" stroke-dasharray="1.5 1.8"/></svg>
<div class="a" style="left:1735px;top:545.7px;width:161px;height:39px;overflow:hidden"><div class="t" style="left:0;top:0;line-height:39px;font-size:17px;letter-spacing:0.25px;color:#e6e7e8">Bloc prix</div></div>
<div class="a" style="left:1712px;top:592.3px;width:185px;height:39.4px;border:1px solid #3d434b;border-radius:6px;background:transparent"></div>
<svg class="a ic" style="left:1723.5px;top:602.5300000000001px;width:19px;height:19px;stroke:#8e9399;stroke-width:1.3" viewBox="0 0 19 19"><path d="M13 5c-1-2-3-2.5-4.5-2.5C6.5 2.5 5 3.7 5 5.5 5 9.5 13 8 13 12.5c0 2-1.7 3.2-4 3.2-2 0-3.7-.8-4.5-2.5 M9 0v18.5"/></svg>
<div class="a" style="left:1755px;top:592.3px;width:141px;height:39px;overflow:hidden"><div class="t" style="left:0;top:0;line-height:39px;font-size:17px;letter-spacing:0.25px;color:#e6e7e8">Prix du produit</div></div>
<div class="a" style="left:1712px;top:639.0px;width:185px;height:39.4px;border:1px solid #3d434b;border-radius:6px;background:transparent"></div>
<svg class="a ic" style="left:1723.5px;top:649.2px;width:19px;height:19px;stroke:#8e9399;stroke-width:1.3" viewBox="0 0 19 19"><path d="M1 3h18 M1 7.5h18 M1 12h18 M1 16.5h18"/></svg>
<div class="a" style="left:1755px;top:639.0px;width:141px;height:39px;overflow:hidden"><div class="t" style="left:0;top:0;line-height:39px;font-size:17px;letter-spacing:0.25px;color:#e6e7e8">Texte basique</div></div>
<div class="a" style="left:1692px;top:685.7px;width:205px;height:39.4px;border:1px solid #3d434b;border-radius:6px;background:transparent"></div>
<svg class="a ic" style="left:1703.5px;top:695.8700000000001px;width:19px;height:19px;stroke:#8e9399;stroke-width:1.3" viewBox="0 0 19 19"><path d="M10 1.5l8 4v9.5l-8 4.5-8-4.5V5.5z M2 5.5l8 4.5 8-4.5 M10 10v10 M6 3.5l8 4.5"/></svg>
<div class="a" style="left:1735px;top:685.7px;width:161px;height:39px;overflow:hidden"><div class="t" style="left:0;top:0;line-height:39px;font-size:17px;letter-spacing:0.25px;color:#e6e7e8">Stock du produit</div></div>
<div class="a" style="left:1692px;top:732.3px;width:205px;height:39.4px;border:1px solid #5a4712;border-radius:6px;background:#5a4712"></div>
<svg class="a ic" style="left:1703.5px;top:742.54px;width:19px;height:19px;stroke:#e2c24a;stroke-width:1.3" viewBox="0 0 19 19"><path d="M1 3h17 M1 7.5h13 M1 12h17 M1 16.5h10"/></svg>
<div class="a" style="left:1735px;top:732.3px;width:161px;height:39px;overflow:hidden"><div class="t" style="left:0;top:0;line-height:39px;font-size:17px;letter-spacing:0.25px;color:#e7c443">Texte enrichi</div></div>
<div class="a" style="left:1692px;top:779.0px;width:205px;height:39.4px;border:1px solid #3d434b;border-radius:6px;background:transparent"></div>
<svg class="a ic" style="left:1703.5px;top:789.21px;width:19px;height:19px;stroke:#8e9399;stroke-width:1.3" viewBox="0 0 19 19"><path d="M1 3h3l2 10h10l2-8H5 M17 1l2 2"/><circle cx="7" cy="16.5" r="1.3"/><circle cx="15" cy="16.5" r="1.3"/></svg>
<div class="a" style="left:1735px;top:779.0px;width:161px;height:39px;overflow:hidden"><div class="t" style="left:0;top:0;line-height:39px;font-size:17px;letter-spacing:0.25px;color:#e6e7e8">Ajouter au panier</div></div>
<svg class="a ic" style="left:1900px;top:790.71px;width:16px;height:17px;stroke:#777b80;stroke-width:1.2" viewBox="0 0 16 17"><path d="M1 1h14l-1.3 11L8 16l-5.7-4z M5 4h6l-.6 2.5H6 M6 6.5h4l-.5 3L8 10.5 6.5 10"/></svg>
<div class="a" style="left:1632px;top:825.7px;width:265px;height:39.4px;border:1px solid #3d434b;border-radius:6px;background:transparent"></div>
<svg class="a ic" style="left:1610px;top:840.3800000000001px;width:16px;height:9px;stroke:#6c7177;stroke-width:1.3" viewBox="0 0 16 9"><path d="M1 1l7 7 7-7"/></svg>
<svg class="a ic" style="left:1643.5px;top:835.8800000000001px;width:19px;height:19px;stroke:#8e9399;stroke-width:1.3" viewBox="0 0 19 19"><rect x="1" y="1" width="17" height="17"/></svg>
<div class="a" style="left:1675px;top:825.7px;width:221px;height:39px;overflow:hidden"><div class="t" style="left:0;top:0;line-height:39px;font-size:17px;letter-spacing:0.25px;color:#e6e7e8">pagination</div></div>
<div class="a" style="left:1652px;top:872.4px;width:245px;height:39.4px;border:1px solid #3d434b;border-radius:6px;background:transparent"></div>
<svg class="a ic" style="left:1663.5px;top:882.5500000000002px;width:19px;height:19px;stroke:#8e9399;stroke-width:1.3" viewBox="0 0 19 19"><path d="M1 18h18 M3 16V2 M6 16V5 M9 16V9 M12 16v-5 M15 16v-3"/></svg>
<div class="a" style="left:1695px;top:872.4px;width:201px;height:39px;overflow:hidden"><div class="t" style="left:0;top:0;line-height:39px;font-size:17px;letter-spacing:0.25px;color:#e6e7e8">Résumé des résultats de la requête</div></div>
<div class="a" style="left:1652px;top:919.0px;width:245px;height:39.4px;border:1px solid #3d434b;border-radius:6px;background:transparent"></div>
<svg class="a ic" style="left:1663.5px;top:929.22px;width:19px;height:19px;stroke:#8e9399;stroke-width:1.3" viewBox="0 0 19 19"><path d="M2 2l7 7-7 7 M8 2l7 7-7 7"/></svg>
<div class="a" style="left:1695px;top:919.0px;width:201px;height:39px;overflow:hidden"><div class="t" style="left:0;top:0;line-height:39px;font-size:17px;letter-spacing:0.25px;color:#e6e7e8">Pagination</div></div>
<svg class="a ic" style="left:1900px;top:930.72px;width:16px;height:17px;stroke:#777b80;stroke-width:1.2" viewBox="0 0 16 17"><path d="M3.5 7a5 5 0 1 1 9 0 M6 16l-2-3 M7 15V7a1 1 0 0 1 2 0v3l3 1 .5 4"/></svg>
<div class="a" style="left:1572px;top:965.7px;width:325px;height:39.4px;border:1px solid #3d434b;border-radius:6px;background:transparent"></div>
<svg class="a ic" style="left:1550px;top:980.3900000000001px;width:16px;height:9px;stroke:#6c7177;stroke-width:1.3" viewBox="0 0 16 9"><path d="M1 1l7 7 7-7"/></svg>
<svg class="a ic" style="left:1583.5px;top:975.8900000000001px;width:19px;height:19px;stroke:#8e9399;stroke-width:1.3" viewBox="0 0 19 19"><rect x="2" y="4" width="16" height="12"/><path d="M2 1h16 M2 19h16"/></svg>
<div class="a" style="left:1615px;top:965.7px;width:281px;height:39px;overflow:hidden"><div class="t" style="left:0;top:0;line-height:39px;font-size:17px;letter-spacing:0.25px;color:#e6e7e8">Section</div></div>
<div class="a" style="left:1592px;top:1012.4px;width:305px;height:39.4px;border:1px solid #3d434b;border-radius:6px;background:transparent"></div>
<svg class="a ic" style="left:1603.5px;top:1022.5600000000002px;width:19px;height:19px;stroke:#8e9399;stroke-width:1.3" viewBox="0 0 19 19"><rect x="2" y="2" width="16" height="16"/><path d="M5 2v16 M15 2v16"/></svg>
<div class="a" style="left:1635px;top:1012.4px;width:261px;height:39px;overflow:hidden"><div class="t" style="left:0;top:0;line-height:39px;font-size:17px;letter-spacing:0.25px;color:#e6e7e8">Conteneur</div></div>
<svg class="a " style="left:1558px;top:919px;width:14px;height:22px;fill:#fff;stroke:#000;stroke-width:1.2;stroke-linejoin:round" viewBox="0 0 14 22"><path d="M1 1v17l4.2-4 3 7 2.8-1.2-3-6.8H14z"/></svg>
<div class="a" style="left:0;top:16px;width:1px;height:1017px;background:#2c2f33"></div>
<div class="a" style="left:1918px;top:16px;width:2px;height:1017px;background:#2a2d31"></div>
</div></body></html>
